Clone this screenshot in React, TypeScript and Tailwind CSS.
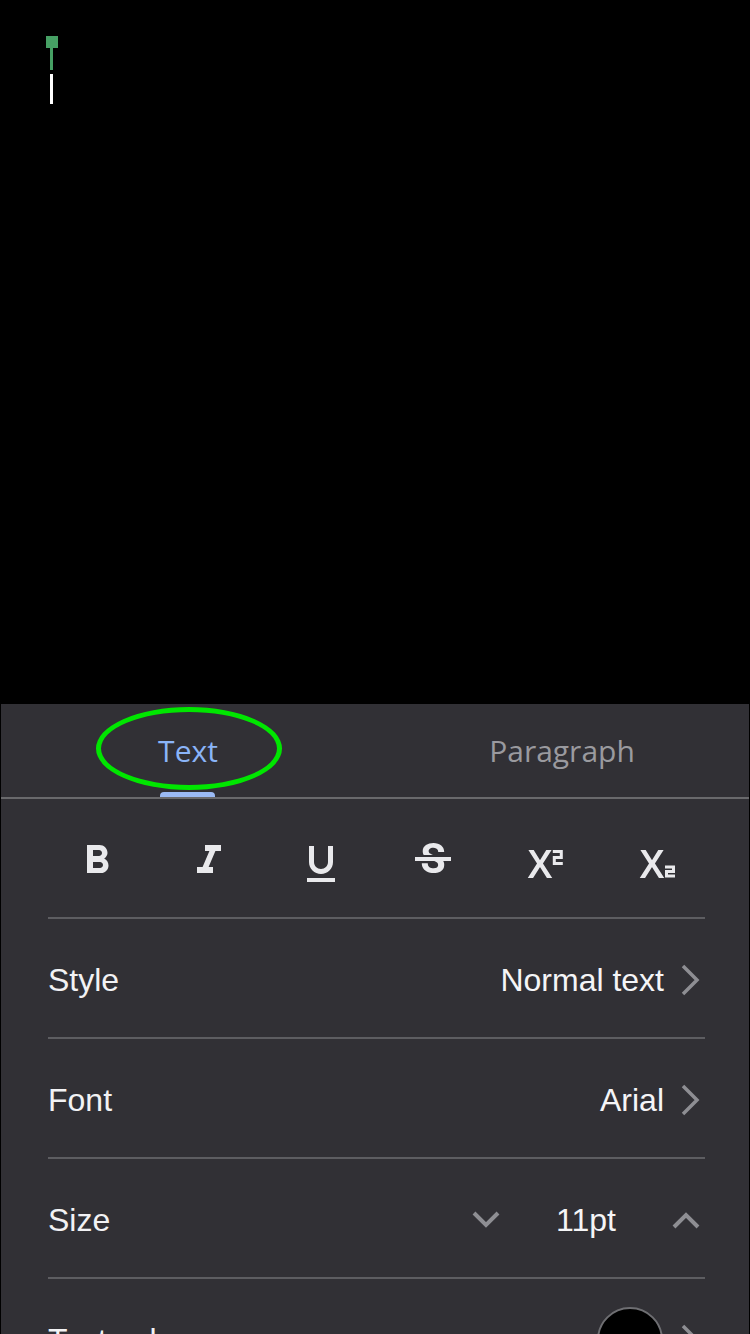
import React from 'react';
import {
  MdFormatBold,
  MdFormatItalic,
  MdFormatUnderlined,
  MdStrikethroughS,
} from 'react-icons/md';

// ============================================
// Small drawings
// ============================================

const X_PATH =
  'M5.88 20h2.66l3.4-5.42h.12l3.4 5.42h2.66l-4.65-7.27L17.81 6h-2.68l-3.07 4.99h-.12L8.85 6H6.19l4.32 6.73L5.88 20z';

function ScriptIcon({ sub }: { sub?: boolean }) {
  const two = sub
    ? '37,29 45.5,29 45.5,33.5 38.5,33.5 38.5,38 47,38'
    : '36.8,13.5 45.3,13.5 45.3,19.5 38.3,19.5 38.3,25.5 46.8,25.5';
  return (
    <svg width="48" height="48" viewBox="0 0 48 48">
      <path d={X_PATH} transform="scale(2)" fill="currentColor" />
      <polyline points={two} fill="none" stroke="currentColor" strokeWidth="3" />
    </svg>
  );
}

function ChevronRight() {
  return (
    <svg width="20" height="32" viewBox="0 0 20 32" className="shrink-0">
      <polyline points="3,2 17,16 3,30" fill="none" stroke="#8e8e93" strokeWidth="3.5" />
    </svg>
  );
}

function ChevronV({ up }: { up?: boolean }) {
  return (
    <svg width="28" height="18" viewBox="0 0 28 18" className="shrink-0">
      <polyline
        points={up ? '2,16 14,4 26,16' : '2,2 14,14 26,2'}
        fill="none"
        stroke="#8e8e93"
        strokeWidth="4"
      />
    </svg>
  );
}

// ============================================
// Rows
// ============================================

function Divider() {
  return <div className="ml-[47px] mr-[44px] h-[2px] bg-[#5d5d61]" />;
}

function NavRow({ label, value }: { label: string; value: string }) {
  return (
    <div className="h-[118px] pl-[47px] pr-[49px] pt-[4px] flex items-center justify-between">
      <span className="text-[32px] text-[#f2f2f4]">{label}</span>
      <div className="flex items-center gap-[16px]">
        <span className="text-[32px] text-[#f5f5f7]">{value}</span>
        <ChevronRight />
      </div>
    </div>
  );
}

function FormatRow() {
  const icons = [
    { key: 'b', el: <MdFormatBold size={48} />, shift: '' },
    { key: 'i', el: <MdFormatItalic size={48} />, shift: '' },
    { key: 'u', el: <MdFormatUnderlined size={48} />, shift: 'translate-y-[3px]' },
    { key: 's', el: <MdStrikethroughS size={48} />, shift: '' },
    { key: 'sup', el: <ScriptIcon />, shift: '-translate-x-[5px] translate-y-[1px]' },
    { key: 'sub', el: <ScriptIcon sub />, shift: '-translate-x-[5px] translate-y-[1px]' },
  ];
  return (
    <div className="h-[118px] pl-[40px] pt-[6px] flex items-center text-[#e9e9ec]">
      {icons.map((ic) => (
        <div key={ic.key} className="w-[112px] flex justify-center">
          <div className={ic.shift}>{ic.el}</div>
        </div>
      ))}
    </div>
  );
}

// ============================================
// Main
// ============================================

export default function App() {
  return (
    <div
      className="w-[750px] h-[1334px] bg-black overflow-hidden flex flex-col"
      style={{ fontFamily: '"Liberation Sans", Arial, sans-serif' }}
    >
      {/* Document canvas with cursor */}
      <div className="h-[704px] shrink-0 pt-[36px] pl-[46px]">
        <div className="w-[12px] h-[12px] bg-[#46a064]" />
        <div className="ml-[4px] w-[3px] h-[22px] bg-[#46a064]" />
        <div className="ml-[4px] mt-[4px] w-[3px] h-[30px] bg-white" />
      </div>

      {/* Bottom sheet */}
      <div className="relative flex-1 mx-[1px] bg-[#313035]">
        {/* Tabs */}
        <div className="h-[93px] flex" style={{ fontFamily: '"Open Sans", Roboto, sans-serif' }}>
          <div className="relative w-1/2 flex items-center justify-center">
            <span className="text-[30px] text-[#8ab4f8]">Text</span>
            <div className="absolute bottom-0 left-[159px] w-[55px] h-[5px] rounded-t-[4px] bg-[#9bbaf5]" />
          </div>
          <div className="w-1/2 flex items-center justify-center">
            <span className="text-[30px] text-[#9a9a9f]">Paragraph</span>
          </div>
        </div>
        <div className="h-[2px] bg-[#69696c]" />

        <FormatRow />
        <Divider />
        <NavRow label="Style" value="Normal text" />
        <Divider />
        <NavRow label="Font" value="Arial" />
        <Divider />

        {/* Size */}
        <div className="h-[118px] pl-[47px] pr-[49px] pt-[4px] flex items-center">
          <span className="text-[32px] text-[#f2f2f4]">Size</span>
          <div className="ml-auto flex items-center">
            <ChevronV />
            <span className="w-[172px] text-center text-[32px] text-[#f5f5f7]">11pt</span>
            <ChevronV up />
          </div>
        </div>
        <Divider />

        {/* Text color (cut off) */}
        <div className="h-[118px] pl-[47px] pr-[49px] pt-[4px] flex items-center">
          <span className="text-[32px] text-[#f2f2f4]">Text color</span>
          <div className="ml-auto flex items-center gap-[17px]">
            <div className="w-[66px] h-[66px] rounded-full bg-black border-2 border-[#6e6e72]" />
            <ChevronRight />
          </div>
        </div>

        {/* Annotation ellipse */}
        <div className="absolute left-[95px] top-[3px] w-[186px] h-[83px] rounded-[50%] border-[5px] border-[#00e600]" />
      </div>
    </div>
  );
}
